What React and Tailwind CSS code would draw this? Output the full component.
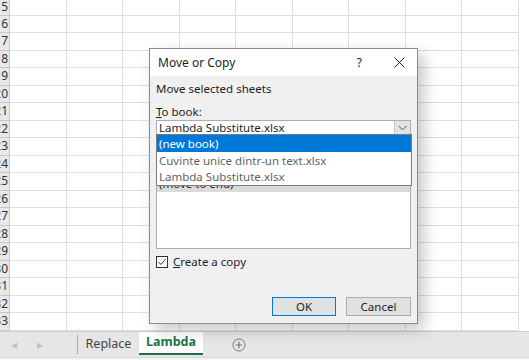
import React from "react"

const rowNums = [15, 16, 17, 18, 19, 20, 21, 22, 23, 24, 25, 26, 27, 28, 29, 30, 31, 32, 33]
const cols = [0, 1, 2, 3, 4, 5, 6, 7, 8]

function GridRow({ num, first }) {
    return (
        <div className={`flex shrink-0 ${first ? "h-[15.5px]" : "h-[17.5px]"}`}>
            <div className="w-[10px] shrink-0 overflow-hidden bg-[#e9e9e9] border-r border-b border-[#c9c9c9] flex items-center justify-end text-[12px] leading-none text-[#333]">
                <span className="pr-[1px]">{num}</span>
            </div>
            {cols.map((c) => (
                <div key={c} className="w-[56.5px] shrink-0 border-r border-b border-[#dedede] bg-white" />
            ))}
        </div>
    )
}

export default function App() {
    return (
        <div className="relative w-[529px] h-[360px] overflow-hidden bg-white flex flex-col" style={{ fontFamily: '"Noto Sans", "Open Sans", sans-serif' }}>

            <div className="flex-1 overflow-hidden flex flex-col">
                {rowNums.map((n, i) => (
                    <GridRow key={n} num={n} first={i === 0} />
                ))}
            </div>

            <div className="h-[26px] shrink-0 bg-[#e6e6e6] border-t border-[#cfcfcf] flex items-stretch text-[12px]">
                <div className="w-[77px] flex items-center gap-[20px] pl-[11px] text-[#c2c2c2] text-[8px]">
                    <span>◀</span>
                    <span>▶</span>
                </div>
                <div className="w-px bg-[#a8a8a8] my-[3px]" />
                <div className="w-[61px] flex items-center justify-center text-[#444] text-[12.5px]">Replace</div>
                <div className="w-[64px] bg-white flex items-center justify-center text-[#217346] font-bold text-[12.5px] border-b-2 border-[#217346] mb-[2px]">
                    Lambda
                </div>
                <div className="w-[72px] flex items-center justify-center">
                    <svg width="14" height="14" viewBox="0 0 14 14">
                        <circle cx="7" cy="7" r="6" fill="none" stroke="#7a7a7a" strokeWidth="1" />
                        <path d="M7 3.8v6.4M3.8 7h6.4" stroke="#7a7a7a" strokeWidth="1.2" />
                    </svg>
                </div>
            </div>
            <div className="h-[3px] shrink-0 bg-[#f4f4f4] border-t border-[#d6d6d6]" />

            <div className="absolute left-[149px] top-[48px] w-[269px] h-[276px] bg-[#f0f0f0] border border-[#8a8a8a] shadow-[6px_6px_14px_rgba(0,0,0,0.22)] flex flex-col text-[11.5px] text-[#1e1e1e]">
                <div className="h-[27px] bg-white flex items-center pl-[8px] pr-[12px] text-[12px]">
                    <span className="flex-1">Move or Copy</span>
                    <span className="mr-[32px] text-[12px]">?</span>
                    <svg width="11" height="11" viewBox="0 0 11 11">
                        <path d="M0.5 0.5l10 10M10.5 0.5l-10 10" stroke="#222" strokeWidth="1" />
                    </svg>
                </div>

                <div className="relative flex-1 flex flex-col px-[6px]">
                    <div className="mt-[5px] h-[16px] flex items-center">Move selected sheets</div>
                    <div className="mt-[7px] h-[16px] flex items-center">
                        <span><span className="underline">T</span>o book:</span>
                    </div>

                    <div className="h-[16px] bg-white border border-[#adadad] flex items-stretch">
                        <div className="flex-1 flex items-center pl-[2px]">Lambda Substitute.xlsx</div>
                        <div className="w-[16px] bg-[#e3e3e3] border-l border-[#c5c5c5] flex items-center justify-center">
                            <svg width="9" height="6" viewBox="0 0 9 6">
                                <path d="M0.5 0.8l4 4 4-4" fill="none" stroke="#555" strokeWidth="1" />
                            </svg>
                        </div>
                    </div>

                    <div className="mt-[4px] h-[109px] bg-white border border-[#adadad] flex flex-col">
                        <div className="h-[17px] pl-[2px] flex items-center">Replace</div>
                        <div className="h-[17px] pl-[2px] flex items-center">Lambda</div>
                        <div className="h-[17px] pl-[2px] flex items-center bg-[#dadada]">(move to end)</div>
                    </div>

                    <div className="mt-[7px] h-[12px] flex items-center gap-[5px]">
                        <div className="w-[12px] h-[12px] bg-white border border-[#333] flex items-center justify-center">
                            <svg width="10" height="10" viewBox="0 0 10 10">
                                <path d="M1.5 5l2.5 2.5 4.5-5.5" fill="none" stroke="#333" strokeWidth="1" />
                            </svg>
                        </div>
                        <span><span className="underline">C</span>reate a copy</span>
                    </div>

                    <div className="mt-auto mb-[7px] flex justify-end gap-[10px]">
                        <div className="w-[64px] h-[19px] bg-[#e1e1e1] border border-[#0078d7] flex items-center justify-center">OK</div>
                        <div className="w-[65px] h-[19px] bg-[#e1e1e1] border border-[#adadad] flex items-center justify-center">Cancel</div>
                    </div>

                    <div className="absolute left-[6px] right-[5px] top-[58px] h-[52px] bg-white border border-[#7a7a7a] flex flex-col text-[#626262]">
                        <div className="h-[17px] pl-[2px] flex items-center bg-[#0078d7] text-white">(new book)</div>
                        <div className="h-[17px] pl-[2px] flex items-center">Cuvinte unice dintr-un text.xlsx</div>
                        <div className="h-[16px] pl-[2px] flex items-center">Lambda Substitute.xlsx</div>
                    </div>
                </div>
            </div>
        </div>
    )
}
